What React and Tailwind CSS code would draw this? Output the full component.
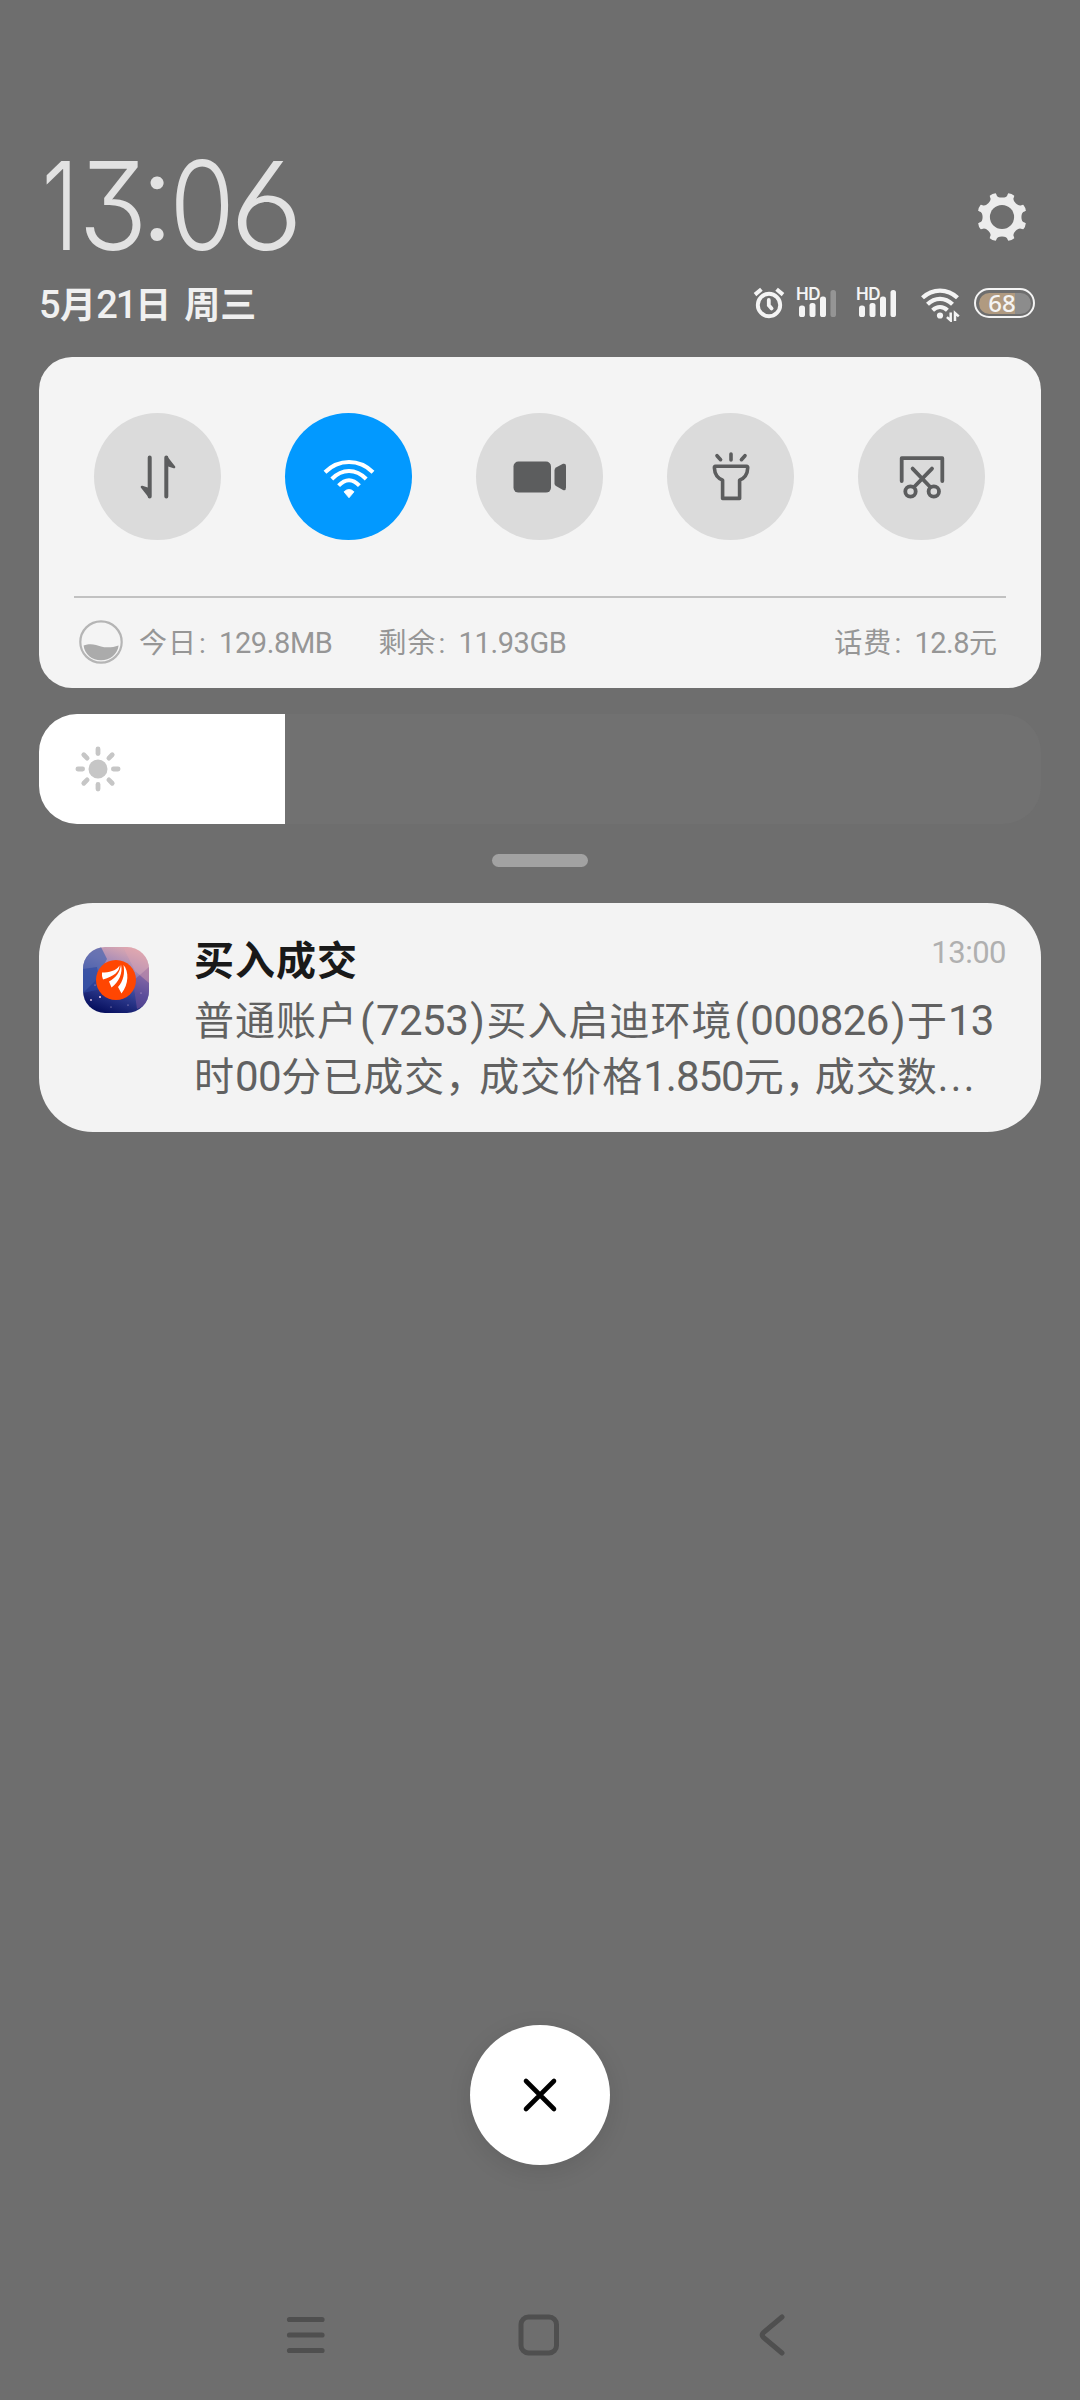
import React from "react";

// Latin digits and letters set beside the Chinese text
function N({ className = "", children }) {
  return <span className={"font-['Roboto','Liberation_Sans',sans-serif] " + className}>{children}</span>;
}

// Account or stock number in spaced parentheses
function Code({ children }) {
  return (
    <N className="text-[42px] tracking-[-0.500px]">
      <span className="px-[2px]">(</span>{children}<span className="px-[2px]">)</span>
    </N>
  );
}

function Gear() {
  const teeth = [22.5, 67.5, 112.5, 157.5, 202.5, 247.5, 292.5, 337.5];
  const notches = [0, 45, 90, 135, 180, 225, 270, 315];
  return (
    <svg width="50" height="50" viewBox="-25 -25 50 50">
      <mask id="gearMask">
        <rect x="-25" y="-25" width="50" height="50" fill="#fff" />
        <circle r="12.1" fill="#000" />
        {notches.map((a) => (
          <path key={a} d="M-7.2 -27 L-5.6 -22.6 Q-5 -19.4 0 -19.4 Q5 -19.4 5.6 -22.6 L7.2 -27 Z" fill="#000" transform={`rotate(${a})`} />
        ))}
      </mask>
      <g mask="url(#gearMask)" fill="#ececec">
        <circle r="22.5" />
        {teeth.map((a) => (
          <path key={a} d="M-6 -20 L-3.2 -24.4 Q0 -25.4 3.2 -24.4 L6 -20 Z" transform={`rotate(${a})`} />
        ))}
      </g>
    </svg>
  );
}

function Alarm() {
  return (
    <svg width="32" height="32" viewBox="0 0 32 32" fill="none" stroke="#f4f4f4" strokeLinecap="round">
      <circle cx="16" cy="18" r="11.2" strokeWidth="3.9" />
      <path d="M15.8 13v5.2l2.8 3.2" strokeWidth="3.8" />
      <path d="M2 7.6 8.4 2.2M30 7.6 23.6 2.2" strokeWidth="4" strokeLinecap="butt" />
    </svg>
  );
}

function Signal({ last }) {
  return (
    <div className="relative h-[32px] w-[42px]">
      <span className="absolute left-0 top-[-1px] font-['Inter',sans-serif] text-[17px] font-semibold leading-[16px] tracking-[-0.5px] text-[#f4f4f4]">HD</span>
      <svg className="block" width="42" height="32" viewBox="0 0 42 32" fill="#f4f4f4">
        <rect x="3" y="18.500" width="6" height="11.5" rx="2.6" />
        <rect x="13.5" y="16" width="6" height="14" rx="2.6" />
        <rect x="24" y="9.500" width="6" height="20.500" rx="2.6" />
        <rect x="34.500" y="3" width="5.500" height="27" rx="2.6" fill={last} />
      </svg>
    </div>
  );
}

function StatusWifi() {
  return (
    <svg width="40" height="36" viewBox="0 0 40 36" fill="none" stroke="#f4f4f4" strokeWidth="4.200">
      <path d="M1.500 11.800Q9 4.600 19 4.600T36.500 11.800" />
      <path d="M6.500 18.200Q12 12.800 19 12.800T31.500 18.200" />
      <path d="M11.600 24.200Q15 21 19 21T26.400 24.200" />
      <circle cx="19" cy="29.500" r="3.100" fill="#f4f4f4" stroke="none" />
      <path d="M29.700 26.500v8l-3.800-3.400M34 35v-8l3.800 3.400" strokeWidth="2.500" />
    </svg>
  );
}

function DataIcon() {
  return (
    <svg width="44" height="50" viewBox="0 0 44 50" fill="#5c5d5e" stroke="#5c5d5e" strokeLinecap="round" strokeLinejoin="round">
      <path d="M13.700 5.500V44.500M30.300 44.500V5.500" strokeWidth="4" fill="none" />
      <path d="M13.700 37.500V44.600L6 35ZM13.700 37.800 6 35M30.300 12.500V5.400L38 15ZM30.300 12.200 38 15" strokeWidth="2.600" />
    </svg>
  );
}

function WifiIcon() {
  return (
    <svg width="54" height="44" viewBox="0 0 54 44" fill="none" stroke="#fff" strokeWidth="4">
      <path d="M3 17.200C9.500 10.800 17.500 7 27 7s17.500 3.800 24 10.200" />
      <path d="M9.800 24C14.500 19.200 20.200 16 27 16s12.500 3.200 17.200 8" />
      <path d="M16.600 30.600C19.600 27.400 22.800 25.200 27 25.200s7.400 2.200 10.400 5.400" />
      <path d="M27 42.800 22 36.800Q27 32 32 36.800Z" fill="#fff" strokeWidth="0.800" />
    </svg>
  );
}

function CameraIcon() {
  return (
    <svg width="54" height="34" viewBox="0 0 54 34" fill="#5c5d5e">
      <rect x="0.500" y="1.600" width="37.500" height="31" rx="5" />
      <path d="M41.500 10.500Q41.500 8.600 43 7.600L50 3.800Q53 3 53 6V27.500Q53 31 50 30L43 26Q41.500 25 41.500 23.500Z" />
    </svg>
  );
}

function TorchIcon() {
  return (
    <svg width="40" height="52" viewBox="0 0 40 52" fill="none" stroke="#5c5d5e" strokeWidth="3.600" strokeLinecap="round" strokeLinejoin="round">
      <path d="M6 4.700 9.600 8.700M20 3v6M34 4.700 30.400 8.700" />
      <path d="M4.500 15.200H35.500Q37 15.200 36.700 17 36.400 26 28.600 29.200V47.400H11.600V29.200Q3.800 26 3.400 17 3.200 15.200 4.500 15.200Z" />
    </svg>
  );
}

function ShotIcon() {
  return (
    <svg width="46" height="46" viewBox="0 0 46 46" fill="none" stroke="#5c5d5e" strokeWidth="3.800" strokeLinecap="round" strokeLinejoin="round">
      <path d="M2.700 27V4.200H43.300V27" />
      <path d="M13.600 14.600 31 32.800M33 14.600 15.300 32.800" />
      <circle cx="11.500" cy="37.500" r="5.200" />
      <circle cx="34.800" cy="37.500" r="5.200" />
    </svg>
  );
}

function Toggle({ on, children }) {
  return (
    <div className={"flex size-[127px] items-center justify-center rounded-full " + (on ? "bg-[#0299ff]" : "bg-[#dbdbdb]")}>
      {children}
    </div>
  );
}

function DropIcon() {
  return (
    <svg className="mt-[-1px]" width="44" height="44" viewBox="0 0 44 44">
      <circle cx="22" cy="22" r="20.700" fill="none" stroke="#b5b5b5" strokeWidth="2.200" />
      <path d="M4.600 25.500C12 23 17 25 22 26.500S34 27.500 39.600 25.500C38.500 34.500 31 40.200 22 40.200S5.600 34.500 4.600 25.500Z" fill="#ababab" />
    </svg>
  );
}

function Sun() {
  return (
    <svg width="46" height="46" viewBox="-23 -23 46 46" fill="#c6c6c6">
      <circle r="9.500" />
      {[0, 45, 90, 135, 180, 225, 270, 315].map((a) => (
        <rect key={a} x="-2.400" y="-22.500" width="4.800" height="9.500" rx="2.400" transform={`rotate(${a})`} />
      ))}
    </svg>
  );
}

function AppLogo() {
  return (
    <svg width="66" height="66" viewBox="0 0 66 66">
      <defs>
        <linearGradient id="sky" x1="0.700" y1="0" x2="0.350" y2="1">
          <stop offset="0" stopColor="#dfaab0" />
          <stop offset="0.300" stopColor="#a58bb8" />
          <stop offset="0.600" stopColor="#3a489c" />
          <stop offset="1" stopColor="#07105f" />
        </linearGradient>
        <clipPath id="logoClip"><rect width="66" height="66" rx="22" /></clipPath>
      </defs>
      <g clipPath="url(#logoClip)">
        <rect width="66" height="66" fill="url(#sky)" />
        <path d="M0 0H18L24 12 12 34 0 46Z" fill="#5068b0" opacity="0.750" />
        <path d="M0 22 14 20 18 42 0 46Z" fill="#2c48a0" opacity="0.600" />
        <path d="M50 34 66 20V56L54 62Z" fill="#71509a" opacity="0.600" />
        <path d="M40 0H66V36L52 24Z" fill="#e0a5b0" opacity="0.450" />
        <g fill="#e6c7e4">
          <circle cx="17" cy="50" r="1.100" /><circle cx="8" cy="53" r="0.900" /><circle cx="28" cy="60" r="0.500" />
          <circle cx="12" cy="38" r="0.500" /><circle cx="45" cy="58" r="0.500" /><circle cx="58" cy="46" r="0.500" />
        </g>
      </g>
      <circle cx="33" cy="33" r="20" fill="#ff4602" />
      <g fill="#fff">
        <path d="M19 25.500C26 25.500 33 24 36.500 18.500 36.500 25 31 29 20 32.500Q18.500 29 19 25.500Z" />
        <path d="M38 17.500C40 26 36 35 28.500 40.500L26 34.500C33 30.500 37 25.500 38 17.500Z" />
        <path d="M40.500 18C46 24 46 37 38.500 46.500L35 40C40.500 34 42 26 40.500 18Z" />
      </g>
    </svg>
  );
}

export default function App() {
  return (
    <div className="flex h-[2400px] w-[1080px] flex-col bg-[#6e6e6e] px-[39px] font-['Noto_Sans_CJK_SC',sans-serif]">
      <header className="flex h-[357px] flex-col">
        <div className="mt-[146px] flex h-[120px] items-center justify-between">
          <div className="flex font-['Inter',sans-serif] text-[123px] font-light leading-[120px] text-[#e2e2e2] [font-feature-settings:'cv03','cv09','ss01']">
            <span className="flex w-[42.4px] justify-center"><span className="scale-x-[0.77]">1</span></span>
            <span className="flex w-[53px] justify-center"><span className="scale-x-[0.93] tracking-[-10px]">3</span></span>
            <span className="flex w-[35.2px] justify-center"><span className="-translate-y-[10px] tracking-[-10px]">:</span></span>
            <span className="flex w-[57.2px] justify-center"><span className="scale-x-[0.86] tracking-[-10px]">0</span></span>
            <span className="flex w-[69.4px] justify-center"><span className="scale-x-[1.04] tracking-[-10px]">6</span></span>
          </div>
          <div className="mr-[14px] mt-[22px]"><Gear /></div>
        </div>
        <div className="mt-[12px] flex h-[50px] items-center justify-between">
          <div className="flex whitespace-nowrap text-[36px] font-bold leading-[50px] text-[#f0f0f0]">
            <span><N className="text-[38px] font-medium tracking-[-0.5px]">5</N>月<N className="text-[38px] font-medium tracking-[-2px]">21</N>日</span>
            <span className="ml-[13px]">周三</span>
          </div>
          <div className="mr-[6px] flex items-center">
            <Alarm />
            <div className="ml-[11px]"><Signal last="#959595" /></div>
            <div className="ml-[18px]"><Signal last="#f4f4f4" /></div>
            <div className="ml-[23px] mt-[2px]"><StatusWifi /></div>
            <div className="ml-[13px] flex h-[30px] w-[61px] rounded-full border-[2.500px] border-[#f4f4f4] p-[2.500px]">
              <div className="flex h-full w-full items-center justify-center rounded-full bg-[linear-gradient(90deg,#b09a80_70%,#8c8c8c_70%)] font-['Noto_Sans',sans-serif] text-[24px] font-medium leading-none text-[#f4f4f4]"><span className="ml-[-5px]">68</span></div>
            </div>
          </div>
        </div>
      </header>

      <section className="flex h-[331px] flex-col rounded-[33px] bg-[#f4f4f4] px-[35px]">
        <div className="mt-[56px] flex h-[127px] justify-between pl-[20px] pr-[21px]">
          <Toggle><DataIcon /></Toggle>
          <Toggle on><WifiIcon /></Toggle>
          <Toggle><CameraIcon /></Toggle>
          <Toggle><TorchIcon /></Toggle>
          <Toggle><ShotIcon /></Toggle>
        </div>
        <div className="mt-[56px] h-[2px] bg-[#c1c1c1]" />
        <div className="flex h-[89px] items-center whitespace-nowrap pl-[5px] pr-[8px] text-[28px] leading-[40px] tracking-[1px] text-[#969696]">
          <DropIcon />
          <span className="ml-[16px]">今日<N className="ml-[2px] mr-[5px]">:</N> <N className="text-[29px] tracking-[-0.4px]">129.8MB</N></span>
          <span className="ml-[46px]">剩余<N className="ml-[2px] mr-[5px]">:</N> <N className="text-[29px] tracking-[-0.4px]">11.93GB</N></span>
          <span className="ml-auto">话费<N className="ml-[2px] mr-[5px]">:</N> <N className="text-[29px] tracking-[-0.5px]">12.8</N>元</span>
        </div>
      </section>

      <div className="mt-[26px] h-[110px] overflow-hidden rounded-[38px] bg-[#717171]">
        <div className="flex h-full w-[246px] items-center bg-white pl-[36px]"><Sun /></div>
      </div>

      <div className="mr-[1px] mt-[30px] h-[13px] w-[96px] self-center rounded-full bg-[#a2a2a2]" />

      <section className="mt-[36px] flex h-[229px] rounded-[54px] bg-[#f3f3f3] pl-[44px] pr-[35px]">
        <div className="mt-[44px]"><AppLogo /></div>
        <div className="ml-[45px] flex-1 whitespace-nowrap pt-[26px]">
          <div className="flex h-[61px] justify-between">
            <h1 className="text-[40px] font-bold leading-[58px] tracking-[1px] text-[#191919]">买入成交</h1>
            <N className="text-[31px] leading-[47px] tracking-[-0.500px] text-[#b0b0b0]">13:00</N>
          </div>
          <div className="text-[40px] leading-[56px] tracking-[1px] text-[#616161]">
            <p className="h-[56px]">普通账户<Code>7253</Code>买入启迪环境<Code>000826</Code>于<N className="text-[42px] tracking-[-1px]">13</N></p>
            <p className="h-[56px]">时<N className="text-[42px] tracking-[-0.500px]">00</N>分已成交<span className="tracking-[-6px]">，</span>成交价格<N className="text-[42px] tracking-[-1px]">1.850</N>元<span className="tracking-[-10px]">，</span>成交数<N className="tracking-[2.500px]">...</N></p>
          </div>
        </div>
      </section>

      <div className="mt-[893px] flex size-[140px] items-center justify-center self-center rounded-full bg-white shadow-[0_6px_24px_rgba(0,0,0,0.100)]">
        <svg width="36" height="36" viewBox="0 0 36 36" stroke="#000" strokeWidth="4.600" strokeLinecap="round">
          <path d="M4 4 32 32M32 4 4 32" />
        </svg>
      </div>

      <nav className="mt-[145px] flex h-[50px] items-center pl-[247px]">
        <svg width="40" height="42" viewBox="0 0 40 42" stroke="#4f4f4f" strokeWidth="5.200" strokeLinecap="round">
          <path d="M3.500 5.500H36M3.500 21H36M3.500 36.500H36" />
        </svg>
        <svg className="ml-[192px]" width="42" height="42" viewBox="0 0 42 42" fill="none" stroke="#4f4f4f" strokeWidth="5">
          <rect x="3" y="3" width="35.500" height="36" rx="7.500" />
        </svg>
        <svg className="ml-[197px]" width="28" height="44" viewBox="0 0 28 44" fill="none" stroke="#4f4f4f" strokeWidth="5" strokeLinecap="round">
          <path d="M25 4 6.500 19.500Q4 22 6.500 24.500L25 40" />
        </svg>
      </nav>
    </div>
  );
}
